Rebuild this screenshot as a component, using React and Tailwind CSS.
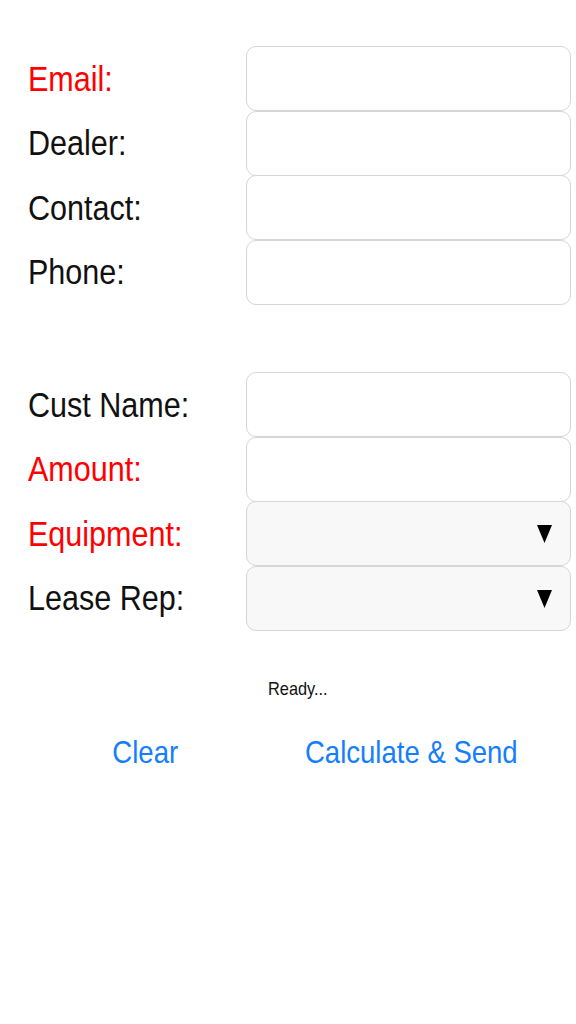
export default function App() {
  const top = [
    { label: "Email:", req: true },
    { label: "Dealer:" },
    { label: "Contact:" },
    { label: "Phone:" },
  ];
  const bottom = [
    { label: "Cust Name:" },
    { label: "Amount:", req: true },
    { label: "Equipment:", req: true, select: true },
    { label: "Lease Rep:", select: true },
  ];

  const Row = ({ label, req, select }) => (
    <div className="flex items-center h-[64.5px]">
      <div className="w-[246px] pl-[28px] pt-[2px]">
        <span
          className={`inline-block origin-left scale-x-[0.86] text-[35.5px] leading-none ${
            req ? "text-[#ff0000]" : "text-[#111]"
          }`}
        >
          {label}
        </span>
      </div>
      <div
        className={`w-[325px] h-[65px] rounded-[10px] border border-[#d6d6d6] flex items-center justify-end pr-[18px] ${
          select ? "bg-[#f8f8f8]" : "bg-white"
        }`}
      >
        {select && (
          <svg width="15" height="18" viewBox="0 0 15 18" className="mt-[1px]">
            <polygon points="0,0 15,0 7.5,18" fill="#000" />
          </svg>
        )}
      </div>
    </div>
  );

  return (
    <div
      className="w-[576px] h-[1024px] bg-white overflow-hidden"
      style={{ fontFamily: '"Liberation Sans", Arial, sans-serif' }}
    >
      <div className="pt-[46.5px]">
        {top.map((r) => (
          <Row key={r.label} {...r} />
        ))}
      </div>
      <div className="pt-[68px]">
        {bottom.map((r) => (
          <Row key={r.label} {...r} />
        ))}
      </div>
      <div className="mt-[48px] pl-[268px] leading-none">
        <span className="inline-block origin-left scale-x-[0.86] text-[19px] text-[#111]">
          Ready...
        </span>
      </div>
      <div className="flex mt-[38px] text-[32px] leading-none text-[#147efb]">
        <div className="w-[290px] text-center">
          <button className="inline-block scale-x-[0.86]">Clear</button>
        </div>
        <div className="pl-[15px]">
          <button className="inline-block origin-left scale-x-[0.86]">
            Calculate &amp; Send
          </button>
        </div>
      </div>
    </div>
  );
}
